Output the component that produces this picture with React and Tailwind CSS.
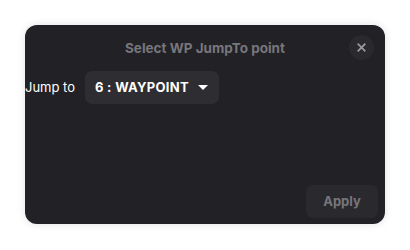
import React from 'react';

function App() {
    return (
        <div className="w-[410px] h-[250px] bg-white pt-[25px] pl-[25px]" style={{ fontFamily: 'Inter, "Liberation Sans", sans-serif' }}>
            <div className="w-[360px] h-[199px] bg-[#222126] rounded-[12px] shadow-[0_0_8px_rgba(0,0,0,0.12)] flex flex-col">
                <div className="relative h-[44px] flex items-center justify-center">
                    <span className="text-[13.5px] font-bold text-[#77767b] pt-[2px]">Select WP JumpTo point</span>
                    <button className="absolute right-[11px] top-[10px] w-[25px] h-[25px] rounded-full bg-[#2a292e] flex items-center justify-center">
                        <svg width="9" height="9" viewBox="0 0 10 10">
                            <path d="M1.5 1.5 L8.5 8.5 M8.5 1.5 L1.5 8.5" stroke="#9a999e" strokeWidth="2" strokeLinecap="square" />
                        </svg>
                    </button>
                </div>
                <div className="flex items-center mt-[2px]">
                    <span className="text-[13px] text-white w-[60px]">Jump to</span>
                    <div className="h-[33px] w-[134px] bg-[#2e2d32] rounded-[7px] flex items-center pl-[10px]">
                        <span className="text-[13px] font-bold text-white tracking-[0.3px]">6 : WAYPOINT</span>
                        <svg className="ml-[9px]" width="10" height="6" viewBox="0 0 10 6">
                            <path d="M0 0 L10 0 L5 5 Z" fill="#ffffff" />
                        </svg>
                    </div>
                </div>
                <div className="flex-1" />
                <div className="flex justify-end pr-[7px] pb-[6px]">
                    <button className="w-[72px] h-[33px] rounded-[7px] bg-[#2a292e] text-[13px] font-bold text-[#77767b]">Apply</button>
                </div>
            </div>
        </div>
    );
}

export default App;
